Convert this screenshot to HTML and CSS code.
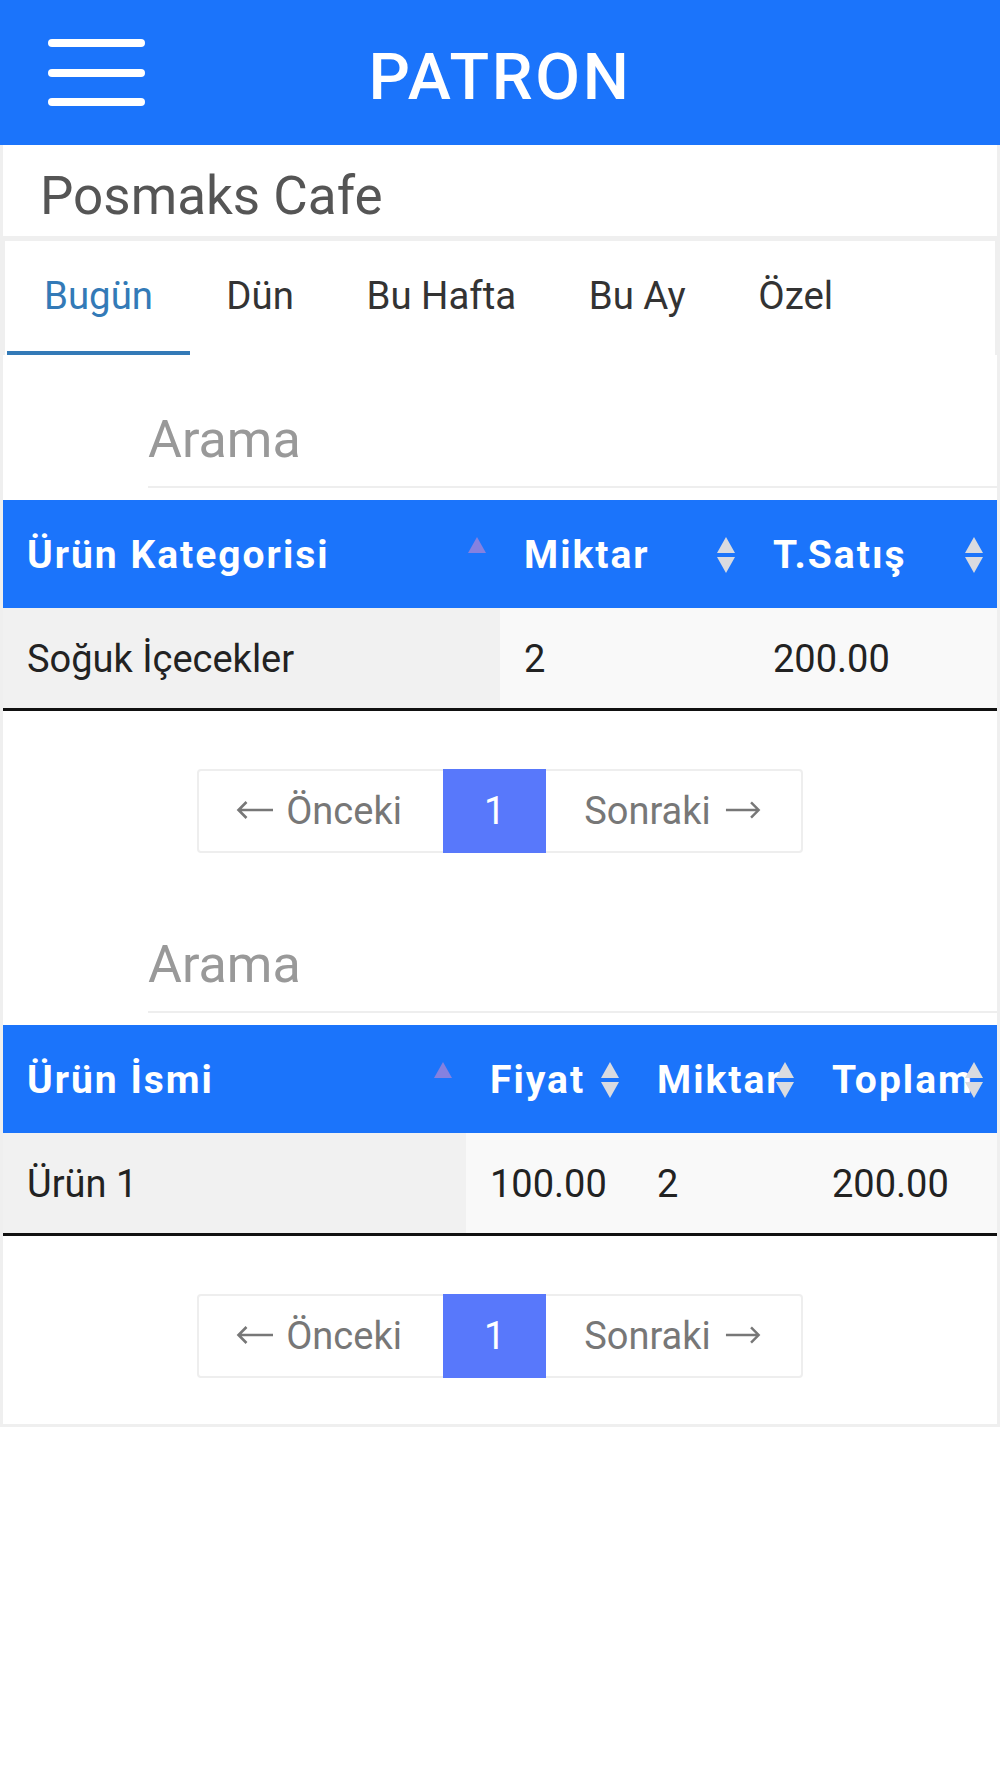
FILE: index.html
```html
<!DOCTYPE html>
<html lang="tr">
<head>
<meta charset="utf-8">
<title>PATRON</title>
<link rel="stylesheet" href="styles.css">
</head>
<body>
<header class="topbar">
  <div class="menu-btn" aria-label="Menü"><span></span><span></span><span></span></div>
  <h1 class="brand">PATRON</h1>
  <div class="spacer"></div>
</header>
<main class="page">
  <div class="venue">Posmaks Cafe</div>
  <nav class="tabs">
    <a class="tab active">Bugün</a>
    <a class="tab">Dün</a>
    <a class="tab">Bu Hafta</a>
    <a class="tab">Bu Ay</a>
    <a class="tab">Özel</a>
  </nav>

  <section class="report">
    <div class="search">Arama</div>
    <table class="grid">
      <colgroup><col class="c-cat"><col class="c-qty"><col class="c-sum"></colgroup>
      <thead>
        <tr>
          <th>Ürün Kategorisi<svg class="sort" viewBox="0 0 22 38" width="22" height="38"><path class="asc" d="M11 1 L20 17 H2 Z"/></svg></th>
          <th>Miktar<svg class="sort" viewBox="0 0 22 38" width="22" height="38"><path class="both" d="M11 1 L20 17 H2 Z"/><path class="both" d="M2 21 H20 L11 37 Z"/></svg></th>
          <th>T.Satış<svg class="sort" viewBox="0 0 22 38" width="22" height="38"><path class="both" d="M11 1 L20 17 H2 Z"/><path class="both" d="M2 21 H20 L11 37 Z"/></svg></th>
        </tr>
      </thead>
      <tbody>
        <tr><td class="sorted">Soğuk İçecekler</td><td>2</td><td>200.00</td></tr>
      </tbody>
    </table>
    <div class="pager-wrap">
      <div class="pager">
        <span class="pg prev"><svg class="arr" viewBox="0 0 38 20" width="38" height="20"><path d="M37 10 H2.5 M10.5 2 L2.5 10 L10.5 18"/></svg>Önceki</span>
        <span class="pg current">1</span>
        <span class="pg next">Sonraki<svg class="arr" viewBox="0 0 38 20" width="36" height="20"><path d="M1 10 H35.5 M27.5 2 L35.5 10 L27.5 18"/></svg></span>
      </div>
    </div>
  </section>

  <section class="report second">
    <div class="search">Arama</div>
    <table class="grid">
      <colgroup><col class="c-name"><col class="c-price"><col class="c-amt"><col class="c-total"></colgroup>
      <thead>
        <tr>
          <th>Ürün İsmi<svg class="sort" viewBox="0 0 22 38" width="22" height="38"><path class="asc" d="M11 1 L20 17 H2 Z"/></svg></th>
          <th>Fiyat<svg class="sort" viewBox="0 0 22 38" width="22" height="38"><path class="both" d="M11 1 L20 17 H2 Z"/><path class="both" d="M2 21 H20 L11 37 Z"/></svg></th>
          <th>Miktar<svg class="sort" viewBox="0 0 22 38" width="22" height="38"><path class="both" d="M11 1 L20 17 H2 Z"/><path class="both" d="M2 21 H20 L11 37 Z"/></svg></th>
          <th>Toplam<svg class="sort" viewBox="0 0 22 38" width="22" height="38"><path class="both" d="M11 1 L20 17 H2 Z"/><path class="both" d="M2 21 H20 L11 37 Z"/></svg></th>
        </tr>
      </thead>
      <tbody>
        <tr><td class="sorted">Ürün 1</td><td>100.00</td><td>2</td><td>200.00</td></tr>
      </tbody>
    </table>
    <div class="pager-wrap last">
      <div class="pager">
        <span class="pg prev"><svg class="arr" viewBox="0 0 38 20" width="38" height="20"><path d="M37 10 H2.5 M10.5 2 L2.5 10 L10.5 18"/></svg>Önceki</span>
        <span class="pg current">1</span>
        <span class="pg next">Sonraki<svg class="arr" viewBox="0 0 38 20" width="36" height="20"><path d="M1 10 H35.5 M27.5 2 L35.5 10 L27.5 18"/></svg></span>
      </div>
    </div>
  </section>
</main>
</body>
</html>
```

FILE: styles.css
```css
* { box-sizing: border-box; }

html, body {
  margin: 0;
  padding: 0;
  background: #ffffff;
  font-family: Roboto, "Noto Sans", "Liberation Sans", sans-serif;
}

.topbar {
  height: 145px;
  background: #1b74fb;
  display: grid;
  grid-template-columns: 1fr auto 1fr;
  align-items: start;
}

.menu-btn {
  margin: 39px 0 0 48px;
  width: 97px;
  display: flex;
  flex-direction: column;
  gap: 21.5px;
}
.menu-btn span {
  display: block;
  height: 8px;
  border-radius: 4px;
  background: #ffffff;
}

.brand {
  margin: 0;
  padding-top: 39px;
  font-size: 65px;
  line-height: 76px;
  font-weight: 500;
  letter-spacing: 2.6px;
  color: #ffffff;
}

.page {
  border-left: 3px solid #efefef;
  border-right: 3px solid #efefef;
  border-bottom: 3px solid #efefef;
  background: #ffffff;
}

.venue {
  padding: 20px 0 8px 37px;
  font-size: 53px;
  line-height: 63px;
  color: #555555;
}

.tabs {
  display: flex;
  border-top: 5px solid #efefef;
  border-left: 2px solid #efefef;
  border-right: 2px solid #efefef;
}
.tab {
  padding: 31px 36.3px;
  font-size: 38.4px;
  line-height: 48px;
  color: #333333;
  border-bottom: 4px solid transparent;
}
.tab:first-child { margin-left: 2px; padding-left: 37px; padding-right: 37px; }
.tab.active {
  color: #337ab7;
  border-bottom-color: #337ab7;
}

.search {
  margin: 54px 0 12px 145px;
  padding-bottom: 15px;
  border-bottom: 2px solid #eeeeee;
  font-size: 52px;
  line-height: 62px;
  color: #999999;
}
.second .search { margin-top: 81px; }

.grid {
  width: 100%;
  border-collapse: collapse;
  table-layout: fixed;
  border-bottom: 3px solid #111111;
}
.c-cat { width: 497px; }
.c-qty { width: 249px; }
.c-sum { width: 248px; }
.c-name { width: 463px; }
.c-price { width: 167px; }
.c-amt { width: 175px; }
.c-total { width: 189px; }

.grid th {
  position: relative;
  height: 108px;
  padding: 25px 0 23px 24px;
  background: #1b74fb;
  color: #ffffff;
  text-align: left;
  font-size: 39px;
  line-height: 60px;
  font-weight: 700;
  letter-spacing: 2px;
  white-space: nowrap;
  vertical-align: top;
}
.sort {
  position: absolute;
  right: 12px;
  top: 50%;
  margin-top: -18px;
}
.sort .both { fill: #d9dbe0; }
.sort .asc { fill: #8581e0; }

.grid td {
  height: 100px;
  padding: 23px 0 21px 24px;
  background: #f9f9f9;
  color: #222222;
  font-size: 38px;
  line-height: 56px;
  white-space: nowrap;
  vertical-align: top;
}
.grid td.sorted { background: #f1f1f1; }

.pager-wrap {
  display: flex;
  justify-content: center;
  padding-top: 58px;
}
.pager-wrap.last { padding-bottom: 46px; }

.pager {
  display: flex;
  border: 2px solid #eeeeee;
  border-radius: 4px;
}
.pg {
  font-size: 38px;
  line-height: 80px;
  color: #777777;
  white-space: nowrap;
}
.pg.prev { padding: 0 41px 0 37px; }
.pg.next { padding: 0 40px 0 38px; }
.pg.current {
  margin: -2px 0;
  padding: 2px 41px;
  background: #5878fb;
  color: #ffffff;
}
.arr {
  vertical-align: 4px;
  fill: none;
  stroke: #777777;
  stroke-width: 2.6;
}
.prev .arr { margin-right: 12px; }
.next .arr { margin-left: 14px; }
```
